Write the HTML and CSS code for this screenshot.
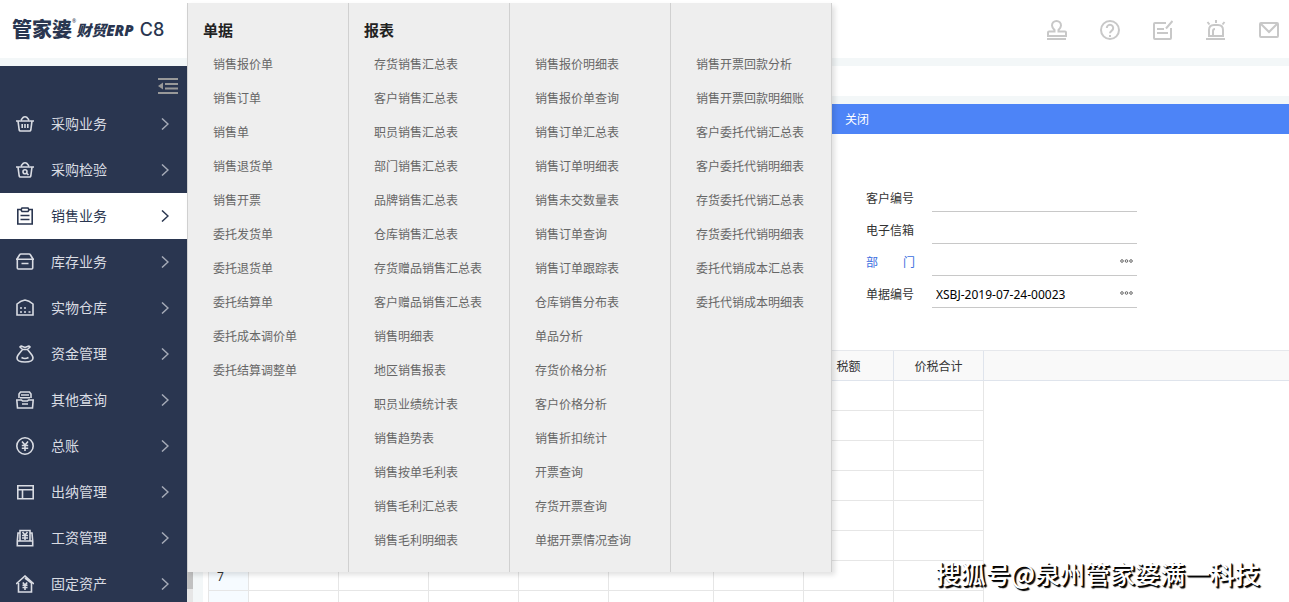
FILE: index.html
```html
<!DOCTYPE html>
<html lang="zh-CN">
<head>
<meta charset="utf-8">
<title>管家婆财贸ERP C8</title>
<link rel="stylesheet" href="styles.css">
</head>
<body>
<header class="topbar">
  <div class="logo"><span class="logo-brand">管家婆</span><span class="logo-mark">®</span><span class="logo-line">财贸ERP</span><span class="logo-version">C8</span></div>
  <div class="tools">
    <button class="tool" aria-label="审批"><svg viewBox="0 0 20 20"><path d="M1 16v-3.500q0-1 1-1h5.500v-1.500C6 8.500 5 7.200 5 5.500a4.500 4.500 0 0 1 9 0c0 1.700-1 3-2.500 4.500v1.500H18q1 0 1 1V16zM0 19h19"/></svg></button>
    <button class="tool" aria-label="帮助"><svg viewBox="0 0 20 20"><circle cx="10" cy="10" r="9"/><path d="M6.800 8a3.200 3.200 0 1 1 5 2.600C10.500 11.500 10 12 10 13.300M10 15v2"/></svg></button>
    <button class="tool" aria-label="便签"><svg viewBox="0 0 20 20"><path d="M13 3H2Q1 3 1 4v14q0 1 1 1h15q1 0 1-1V8M13 8.500L19.500 1M4 9h7M4 13h11"/></svg></button>
    <button class="tool" aria-label="提醒"><svg viewBox="0 0 20 20"><path d="M3 16V10q0-5 5-5h4q5 0 5 5v6zM0 19h19M10 0v3M1.500 2l2 2.500M18.500 2l-2 2.500M7 15v-4q0-2 2-2"/></svg></button>
    <button class="tool" aria-label="邮件"><svg viewBox="0 0 20 20"><rect x="1" y="3" width="18" height="14" rx="1"/><path d="M1.500 3.500L10 12l8.500-8.500"/></svg></button>
  </div>
</header>

<div class="shell">
  <nav class="sidebar">
    <button class="collapse" aria-label="收起菜单"><svg viewBox="0 0 20 16"><path d="M0 1h20M7 6h13M7 10.500h13M0 15h20" fill="none" stroke="currentColor" stroke-width="2"/><path d="M0 8l5-3.500v7z" fill="currentColor"/></svg></button>
    <a class="item" href="#"><svg class="icon" viewBox="0 0 18 18"><path d="M0 6h18M2 6l1.200 9q.2 1 1.200 1h9.200q1 0 1.200-1L16 6M5 5l2-2.500q2-1.500 4 0L13 5M6.200 9v4M9 9v4M11.800 9v4"/></svg><span>采购业务</span><svg class="chevron" viewBox="0 0 8 12"><path d="M1 0.500L7 6l-6 5.500"/></svg></a>
    <a class="item" href="#"><svg class="icon" viewBox="0 0 18 18"><path d="M0 6h18M2 6l1.200 9q.2 1 1.200 1h9.200q1 0 1.200-1L16 6M5 5l2-2.500q2-1.500 4 0L13 5M10.700 12.200l1.800 1.800"/><circle cx="9" cy="10.700" r="2"/></svg><span>采购检验</span><svg class="chevron" viewBox="0 0 8 12"><path d="M1 0.500L7 6l-6 5.500"/></svg></a>
    <a class="item active" href="#"><svg class="icon" viewBox="0 0 18 18"><path d="M5 2.500H1.800V17h14.400V2.500H13M6 1h6l1 2-1 1.500H6L5 3zM4.500 8.500h9M4.500 12.500h9"/></svg><span>销售业务</span><svg class="chevron" viewBox="0 0 8 12"><path d="M1 0.500L7 6l-6 5.500"/></svg></a>
    <a class="item" href="#"><svg class="icon" viewBox="0 0 18 18"><path d="M0 6.200h18M1 6l2.500-4q.5-1 1.500-1h8q1 0 1.500 1L17 6M1.300 6v9q0 1 1 1h13.400q1 0 1-1V6M5.500 10.500h7"/></svg><span>库存业务</span><svg class="chevron" viewBox="0 0 8 12"><path d="M1 0.500L7 6l-6 5.500"/></svg></a>
    <a class="item" href="#"><svg class="icon" viewBox="0 0 18 18"><path d="M1 16V5q4-3.500 8-4 4 .5 8 4v11zM4 9h2M8 9h2M4 13h2M8 13h2M12.500 13h2"/></svg><span>实物仓库</span><svg class="chevron" viewBox="0 0 8 12"><path d="M1 0.500L7 6l-6 5.500"/></svg></a>
    <a class="item" href="#"><svg class="icon" viewBox="0 0 18 18"><path d="M6.500 4.500L4 2q1-1.500 2.500-.5l2.500 1 2.500-1Q13 .5 14 2l-2.500 2.500zM6.500 4.500C4 8 1 10 1 13c0 3 3 4 8 4s8-1 8-4c0-3-3-5-5.500-8.500M5.500 12.500q3.500 2 7 0"/></svg><span>资金管理</span><svg class="chevron" viewBox="0 0 8 12"><path d="M1 0.500L7 6l-6 5.500"/></svg></a>
    <a class="item" href="#"><svg class="icon" viewBox="0 0 18 18"><path d="M3 7V3l1.500-2h9L15 3v4M5 4h8M4 6.700h10M.8 9h4.700l1 1h5l1-1h4.700L16.500 17h-15zM6 13h6"/></svg><span>其他查询</span><svg class="chevron" viewBox="0 0 8 12"><path d="M1 0.500L7 6l-6 5.500"/></svg></a>
    <a class="item" href="#"><svg class="icon" viewBox="0 0 18 18"><circle cx="9" cy="9" r="8.200"/><path d="M6 4.500L9 8l3-3.500M9 8v6M5.800 8.500h6.400M5.800 11.200h6.400"/></svg><span>总账</span><svg class="chevron" viewBox="0 0 8 12"><path d="M1 0.500L7 6l-6 5.500"/></svg></a>
    <a class="item" href="#"><svg class="icon" viewBox="0 0 18 18"><path d="M1.800 2.800h15.400v13H1.800zM1.800 6.800h15.400M6.500 6.800v9"/></svg><span>出纳管理</span><svg class="chevron" viewBox="0 0 8 12"><path d="M1 0.500L7 6l-6 5.500"/></svg></a>
    <a class="item" href="#"><svg class="icon" viewBox="0 0 18 18"><path d="M4 12V1.500h10V12M4 4H2L1.300 12v4.800h15.400V12L16 4h-2M1.300 12h15.400M6.500 3L9 6l2.500-3M9 6v5M6 6.500h6M6 9h6"/></svg><span>工资管理</span><svg class="chevron" viewBox="0 0 8 12"><path d="M1 0.500L7 6l-6 5.500"/></svg></a>
    <a class="item" href="#"><svg class="icon" viewBox="0 0 18 18"><path d="M0 9l9-8 9 8M2.500 8v9h13V8L9 3M6.800 7.500L9 10l2.200-2.500M9 10v5M6.500 10.300h5M6.500 12.500h5"/></svg><span>固定资产</span><svg class="chevron" viewBox="0 0 8 12"><path d="M1 0.500L7 6l-6 5.500"/></svg></a>
  </nav>
  <div class="scrollbar"><div class="thumb"></div></div>
  <main class="content">
    <div class="tabs"></div>
    <div class="actions"><button class="close">关闭</button></div>
    <form class="form">
      <div class="row"><label for="customer">客户编号</label><div class="field"><input id="customer" type="text"></div></div>
      <div class="row"><label for="email">电子信箱</label><div class="field"><input id="email" type="text"></div></div>
      <div class="row"><label class="linked" for="dept"><span>部</span><span>门</span></label><div class="field"><input id="dept" type="text"><button class="more" type="button" aria-label="选择部门"><svg viewBox="0 0 13 4"><circle cx="2" cy="2" r="1.300"/><circle cx="6.500" cy="2" r="1.300"/><circle cx="11" cy="2" r="1.300"/></svg></button></div></div>
      <div class="row"><label for="number">单据编号</label><div class="field"><input id="number" type="text" value="XSBJ-2019-07-24-00023"><button class="more" type="button" aria-label="选择编号"><svg viewBox="0 0 13 4"><circle cx="2" cy="2" r="1.300"/><circle cx="6.500" cy="2" r="1.300"/><circle cx="11" cy="2" r="1.300"/></svg></button></div></div>
    </form>
    <table class="grid">
      <colgroup><col class="c-num"><col class="c-std"><col class="c-std"><col class="c-std"><col class="c-std"><col class="c-wide"><col class="c-std"><col class="c-std"><col class="c-std"><col></colgroup>
      <thead><tr><th></th><th></th><th></th><th></th><th></th><th></th><th></th><th>税额</th><th>价税合计</th><th></th></tr></thead>
      <tbody>
        <tr><td>1</td><td></td><td></td><td></td><td></td><td></td><td></td><td></td><td></td><td></td></tr>
        <tr><td>2</td><td></td><td></td><td></td><td></td><td></td><td></td><td></td><td></td><td></td></tr>
        <tr><td>3</td><td></td><td></td><td></td><td></td><td></td><td></td><td></td><td></td><td></td></tr>
        <tr><td>4</td><td></td><td></td><td></td><td></td><td></td><td></td><td></td><td></td><td></td></tr>
        <tr><td>5</td><td></td><td></td><td></td><td></td><td></td><td></td><td></td><td></td><td></td></tr>
        <tr><td>6</td><td></td><td></td><td></td><td></td><td></td><td></td><td></td><td></td><td></td></tr>
        <tr><td>7</td><td></td><td></td><td></td><td></td><td></td><td></td><td></td><td></td><td></td></tr>
        <tr><td></td><td></td><td></td><td></td><td></td><td></td><td></td><td></td><td></td><td></td></tr>
      </tbody>
    </table>
  </main>
</div>

<div class="flyout">
  <section class="group"><h2>单据</h2>
    <a href="#">销售报价单</a><a href="#">销售订单</a><a href="#">销售单</a><a href="#">销售退货单</a><a href="#">销售开票</a><a href="#">委托发货单</a><a href="#">委托退货单</a><a href="#">委托结算单</a><a href="#">委托成本调价单</a><a href="#">委托结算调整单</a>
  </section>
  <section class="group"><h2>报表</h2>
    <a href="#">存货销售汇总表</a><a href="#">客户销售汇总表</a><a href="#">职员销售汇总表</a><a href="#">部门销售汇总表</a><a href="#">品牌销售汇总表</a><a href="#">仓库销售汇总表</a><a href="#">存货赠品销售汇总表</a><a href="#">客户赠品销售汇总表</a><a href="#">销售明细表</a><a href="#">地区销售报表</a><a href="#">职员业绩统计表</a><a href="#">销售趋势表</a><a href="#">销售按单毛利表</a><a href="#">销售毛利汇总表</a><a href="#">销售毛利明细表</a>
  </section>
  <section class="group"><h2></h2>
    <a href="#">销售报价明细表</a><a href="#">销售报价单查询</a><a href="#">销售订单汇总表</a><a href="#">销售订单明细表</a><a href="#">销售未交数量表</a><a href="#">销售订单查询</a><a href="#">销售订单跟踪表</a><a href="#">仓库销售分布表</a><a href="#">单品分析</a><a href="#">存货价格分析</a><a href="#">客户价格分析</a><a href="#">销售折扣统计</a><a href="#">开票查询</a><a href="#">存货开票查询</a><a href="#">单据开票情况查询</a>
  </section>
  <section class="group"><h2></h2>
    <a href="#">销售开票回款分析</a><a href="#">销售开票回款明细账</a><a href="#">客户委托代销汇总表</a><a href="#">客户委托代销明细表</a><a href="#">存货委托代销汇总表</a><a href="#">存货委托代销明细表</a><a href="#">委托代销成本汇总表</a><a href="#">委托代销成本明细表</a>
  </section>
</div>
<div class="watermark">搜狐号@泉州管家婆满一科技</div>
</body>
</html>
```
FILE: styles.css
```css
* { box-sizing: border-box; }
html, body { height: 100%; }
body {
  margin: 0;
  display: flex;
  flex-direction: column;
  overflow: hidden;
  position: relative;
  background: #fff;
  color: #333;
  font: 12px/18px "Noto Sans", "Noto Sans CJK SC", sans-serif;
}
a { color: inherit; text-decoration: none; }
button { padding: 0; border: 0; background: none; color: inherit; font: inherit; cursor: pointer; }
svg { display: block; fill: none; stroke: currentColor; }

/* top bar */
.topbar {
  flex: none;
  height: 66px;
  padding: 2px 10px 0 12px;
  display: flex;
  align-items: center;
  justify-content: space-between;
  border-bottom: 8px solid #f3f7f8;
}
.logo { display: flex; align-items: center; color: #2a3650; white-space: nowrap; }
.logo-brand { font-size: 20px; line-height: 24px; font-weight: 900; }
.logo-mark { align-self: flex-start; font-size: 5px; line-height: 6px; }
.logo-line { font-size: 15px; font-weight: 900; font-style: italic; }
.logo-version { margin-left: 6px; font-family: Inter, sans-serif; font-size: 18px; font-weight: 500; }
.tools { display: flex; gap: 33px; color: #c8c8c8; }
.tool svg { width: 20px; height: 20px; stroke-width: 2; }

/* side navigation */
.shell { flex: 1; min-height: 0; display: flex; overflow: hidden; }
.sidebar { flex: none; width: 187px; background: #2a3650; color: #d9dce3; }
.collapse { display: block; margin: 12px 9px 7px auto; color: #999; }
.collapse svg { width: 20px; height: 16px; stroke: none; }
.item { display: flex; align-items: center; height: 46px; padding: 0 18px 0 16px; font-size: 14px; }
.item span { flex: 1; margin-left: 17px; }
.item.active { background: #fff; color: #2a3650; }
.icon { width: 18px; height: 18px; stroke-width: 1.6; }
.chevron { width: 8px; height: 12px; stroke-width: 1.5; opacity: 0.7; }
.active .chevron { opacity: 1; }

.scrollbar { flex: none; width: 6px; background: #e6e6e6; }
.thumb { height: 523px; background: #c1c1c1; }

/* document page */
.content { flex: 1; min-width: 0; border-left: 10px solid #f3f7f8; }
.tabs { height: 38px; border-bottom: 8px solid #f3f7f8; }
.actions { display: flex; align-items: center; height: 30px; padding: 2px 0 0 642px; background: #4d84f7; color: #fff; }
.form { padding: 46px 0 42px 663px; }
.row { display: flex; height: 32px; }
.row label { display: flex; align-items: center; justify-content: space-between; width: 49px; margin-right: 17px; padding-top: 6px; white-space: nowrap; }
.row .linked { color: #3c6fe0; }
.field { display: flex; align-items: center; width: 205px; padding: 2px 4px 0; border-bottom: 1px solid #c8c8c8; }
.field input { flex: 1; min-width: 0; padding: 4px 0 0; border: 0; outline: 0; background: none; color: #000; font: inherit; }
.more { color: #666; }
.more svg { width: 13px; height: 4px; }

.grid { width: calc(100% - 5px); margin-left: 5px; table-layout: fixed; border-collapse: separate; border-spacing: 0; border-top: 1px solid #e6e8ec; }
.grid .c-num { width: 41px; }
.grid .c-std { width: 90px; }
.grid .c-wide { width: 105px; }
.grid th { height: 30px; padding: 2px 0 0; background: #f9f9f9; border-right: 1px solid #dfe4ec; border-bottom: 1px solid #dfe4ec; font-weight: 400; }
.grid th:last-child { border-right: 0; }
.grid td { height: 30px; padding: 2px 8px 0; border-right: 1px solid #e6e6e6; border-bottom: 1px solid #e6e6e6; }
.grid td:first-child { background: #f6fbff; border-left: 1px solid #e6e6e6; }
.grid td:last-child { border: 0; }

/* flyout menu over the page */
.flyout {
  position: absolute;
  top: 3px;
  left: 187px;
  display: flex;
  background: #eee;
  border-left: 1px solid #d0d0d0;
  box-shadow: 3px 3px 5px rgba(0, 0, 0, 0.12);
}
.group { width: 161px; padding: 10px 0 14px 15px; border-right: 1px solid #d0d0d0; }
.group h2 { height: 35px; margin: 0; font-size: 15px; line-height: 34px; font-weight: 700; color: #222; }
.group a { display: block; padding-left: 10px; line-height: 34px; color: #666; }

.watermark {
  position: absolute;
  right: 29px;
  bottom: 10px;
  color: #fff;
  font: 500 25px/38px "Noto Sans CJK SC", sans-serif;
  text-shadow: 1px 1px 0 #000, 2px 2px 1px #000;
}
```
